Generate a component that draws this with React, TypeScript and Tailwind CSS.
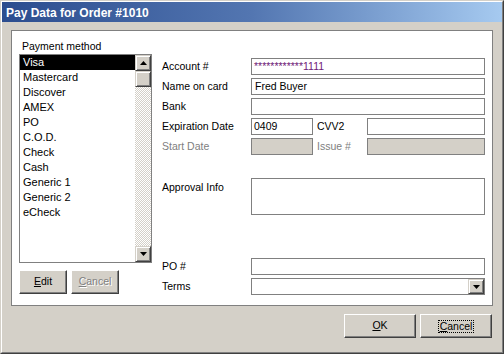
import React from "react";

const raised =
  "border border-t-white border-l-white border-r-[#404040] border-b-[#404040] shadow-[inset_-1px_-1px_0_#808080] bg-[#d4d0c8]";
const scrollBtn =
  "border border-t-[#d4d0c8] border-l-[#d4d0c8] border-r-[#404040] border-b-[#404040] shadow-[inset_1px_1px_0_#ffffff,inset_-1px_-1px_0_#808080] bg-[#d4d0c8] flex items-center justify-center";
const input = "h-[17px] border border-[#808080] bg-white flex items-center px-[3px] overflow-hidden whitespace-nowrap";
const disabledInput = "h-[17px] border border-[#808080] bg-[#d4d0c8]";

function Tri({ down = false }: { down?: boolean }) {
  return (
    <svg width="7" height="4" viewBox="0 0 7 4">
      {down ? <polygon points="0,0 7,0 3.5,4" fill="#000" /> : <polygon points="0,4 7,4 3.5,0" fill="#000" />}
    </svg>
  );
}

const methods = ["Visa", "Mastercard", "Discover", "AMEX", "PO", "C.O.D.", "Check", "Cash", "Generic 1", "Generic 2", "eCheck"];

export default function App() {
  return (
    <div className="w-[504px] h-[354px] bg-[#d4d0c8] border border-t-[#d4d0c8] border-l-[#d4d0c8] border-r-[#404040] border-b-[#404040] font-['Liberation_Sans',Arial,sans-serif] text-black overflow-hidden">
      <div className="h-full w-full border border-t-white border-l-white border-r-[#808080] border-b-[#808080] flex flex-col">
        {/* Title bar */}
        <div className="h-[20px] bg-linear-to-r from-[#2c4d8f] via-[#5376b1] to-[#a6caf0] flex items-center pl-[4px] pt-[1px]">
          <span className="text-white font-bold text-[12px] leading-none">Pay Data for Order #1010</span>
        </div>

        {/* Body */}
        <div className="flex-1 flex flex-col">
          <div className="mt-[8px] ml-[9px] w-[482px] h-[276px] bg-white border border-[#808080] flex flex-row pl-[7px] pt-[8px]">
            {/* Left column */}
            <div className="flex flex-col w-[133px]">
              <div className="h-[15px] leading-[15px] text-[10.5px] pl-[3px]">Payment method</div>
              <div className="h-[209px] border border-[#808080] flex flex-row">
                <div className="flex-1 flex flex-col">
                  {methods.map((m, i) => (
                    <div
                      key={m}
                      className={
                        "h-[15px] leading-[15px] text-[11px] pl-[3px] " + (i === 0 ? "bg-black text-white" : "text-black")
                      }
                    >
                      {m}
                    </div>
                  ))}
                </div>
                <div className="w-[16px] flex flex-col">
                  <div className={scrollBtn + " h-[16px]"}>
                    <Tri />
                  </div>
                  <div className={scrollBtn + " h-[16px]"} />
                  <div className="flex-1 bg-[repeating-conic-gradient(#d4d0c8_0%_25%,#ffffff_0%_50%)] bg-[length:2px_2px]" />
                  <div className={scrollBtn + " h-[16px]"}>
                    <Tri down />
                  </div>
                </div>
              </div>
              <div className="mt-[7px] flex flex-row gap-[4px]">
                <div className={raised + " w-[48px] h-[24px] flex items-center justify-center text-[10.5px]"}>
                  <span>
                    <span className="underline">E</span>dit
                  </span>
                </div>
                <div
                  className={
                    raised +
                    " w-[48px] h-[24px] flex items-center justify-center text-[10.5px] text-[#808080] [text-shadow:1px_1px_0_#ffffff]"
                  }
                >
                  <span>
                    <span className="underline">C</span>ancel
                  </span>
                </div>
              </div>
            </div>

            {/* Right column */}
            <div className="ml-[9px] w-[324px] pt-[19px] flex flex-col text-[10.5px]">
              <div className="grid grid-cols-[90px_234px] gap-y-[3px] items-center">
                <div className="pl-[1px]">Account #</div>
                <div className={input + " pl-[2px]"}>
                  <span className="text-[#6f2077]">************1111</span>
                </div>
                <div className="pl-[1px]">Name on card</div>
                <div className={input}>Fred Buyer</div>
                <div className="pl-[1px]">Bank</div>
                <div className={input} />
                <div className="pl-[1px]">Expiration Date</div>
                <div className="flex flex-row items-center">
                  <div className={input + " w-[62px] pl-[2px]"}>0409</div>
                  <div className="w-[50px] ml-[4px]">CVV2</div>
                  <div className={input + " w-[118px]"} />
                </div>
                <div className="pl-[1px] text-[#808080]">Start Date</div>
                <div className="flex flex-row items-center">
                  <div className={disabledInput + " w-[62px]"} />
                  <div className="w-[50px] ml-[4px] text-[#808080]">Issue #</div>
                  <div className={disabledInput + " w-[118px]"} />
                </div>
              </div>

              <div className="mt-[23px] grid grid-cols-[90px_234px]">
                <div className="pl-[1px] pt-[2px]">Approval Info</div>
                <div className="h-[37px] border border-[#808080] bg-white" />
              </div>

              <div className="mt-[43px] grid grid-cols-[90px_234px] gap-y-[3px] items-center">
                <div className="pl-[1px]">PO #</div>
                <div className={input} />
                <div className="pl-[1px]">Terms</div>
                <div className="h-[17px] border border-[#808080] bg-white flex flex-row justify-end">
                  <div className={scrollBtn + " w-[16px] h-[15px]"}>
                    <Tri down />
                  </div>
                </div>
              </div>
            </div>
          </div>

          {/* Bottom buttons */}
          <div className="mt-[8px] flex flex-row justify-end gap-[4px] pr-[10px]">
            <div className={raised + " w-[72px] h-[24px] flex items-center justify-center text-[10.5px]"}>
              <span>
                <span className="underline">O</span>K
              </span>
            </div>
            <div className={raised + " w-[72px] h-[24px] flex items-center justify-center text-[10.5px]"}>
              <span className="outline outline-1 outline-dotted outline-black px-[1px] leading-[11px]">
                <span className="underline">C</span>ancel
              </span>
            </div>
          </div>
        </div>
      </div>
    </div>
  );
}
